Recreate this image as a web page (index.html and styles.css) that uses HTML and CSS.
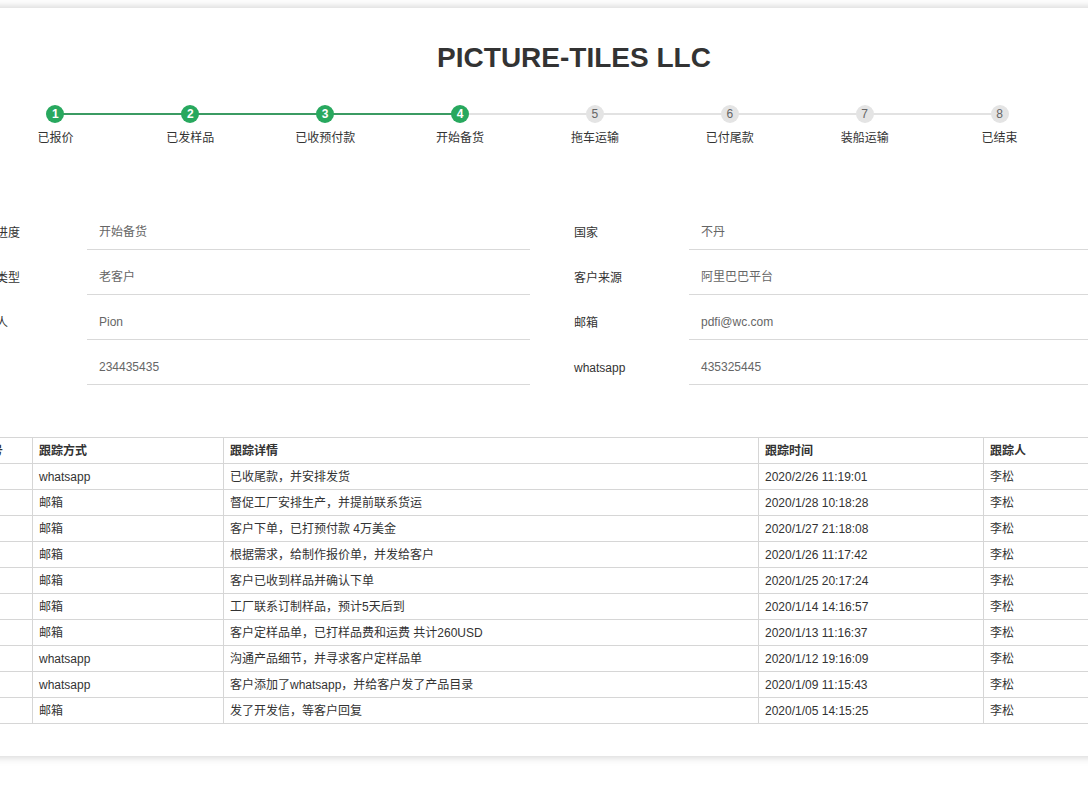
FILE: index.html
```html
<!DOCTYPE html>
<html lang="zh-CN">
<head>
<meta charset="utf-8">
<title>PICTURE-TILES LLC</title>
<link rel="stylesheet" href="styles.css">
</head>
<body>
<div class="card">
  <h1 class="title">PICTURE-TILES LLC</h1>

  <div class="steps">
    <div class="step done"><span class="dot">1</span><span class="label">已报价</span></div>
    <div class="step done"><span class="dot">2</span><span class="label">已发样品</span></div>
    <div class="step done"><span class="dot">3</span><span class="label">已收预付款</span></div>
    <div class="step done current"><span class="dot">4</span><span class="label">开始备货</span></div>
    <div class="step"><span class="dot">5</span><span class="label">拖车运输</span></div>
    <div class="step"><span class="dot">6</span><span class="label">已付尾款</span></div>
    <div class="step"><span class="dot">7</span><span class="label">装船运输</span></div>
    <div class="step last"><span class="dot">8</span><span class="label">已结束</span></div>
  </div>

  <div class="info">
    <div class="row"><span class="k">当前进度</span><span class="v">开始备货</span></div>
    <div class="row"><span class="k">国家</span><span class="v">不丹</span></div>
    <div class="row"><span class="k">客户类型</span><span class="v">老客户</span></div>
    <div class="row"><span class="k">客户来源</span><span class="v">阿里巴巴平台</span></div>
    <div class="row"><span class="k">联系人</span><span class="v">Pion</span></div>
    <div class="row"><span class="k">邮箱</span><span class="v">pdfi@wc.com</span></div>
    <div class="row"><span class="k">电话</span><span class="v">234435435</span></div>
    <div class="row"><span class="k">whatsapp</span><span class="v">435325445</span></div>
  </div>

  <table class="log">
    <colgroup>
      <col class="c1"><col class="c2"><col class="c3"><col class="c4"><col class="c5">
    </colgroup>
    <thead>
      <tr><th>序号</th><th>跟踪方式</th><th>跟踪详情</th><th>跟踪时间</th><th>跟踪人</th></tr>
    </thead>
    <tbody>
      <tr><td>1</td><td>whatsapp</td><td>已收尾款，并安排发货</td><td>2020/2/26 11:19:01</td><td>李松</td></tr>
      <tr><td>2</td><td>邮箱</td><td>督促工厂安排生产，并提前联系货运</td><td>2020/1/28 10:18:28</td><td>李松</td></tr>
      <tr><td>3</td><td>邮箱</td><td>客户下单，已打预付款 4万美金</td><td>2020/1/27 21:18:08</td><td>李松</td></tr>
      <tr><td>4</td><td>邮箱</td><td>根据需求，给制作报价单，并发给客户</td><td>2020/1/26 11:17:42</td><td>李松</td></tr>
      <tr><td>5</td><td>邮箱</td><td>客户已收到样品并确认下单</td><td>2020/1/25 20:17:24</td><td>李松</td></tr>
      <tr><td>6</td><td>邮箱</td><td>工厂联系订制样品，预计5天后到</td><td>2020/1/14 14:16:57</td><td>李松</td></tr>
      <tr><td>7</td><td>邮箱</td><td>客户定样品单，已打样品费和运费 共计260USD</td><td>2020/1/13 11:16:37</td><td>李松</td></tr>
      <tr><td>8</td><td>whatsapp</td><td>沟通产品细节，并寻求客户定样品单</td><td>2020/1/12 19:16:09</td><td>李松</td></tr>
      <tr><td>9</td><td>whatsapp</td><td>客户添加了whatsapp，并给客户发了产品目录</td><td>2020/1/09 11:15:43</td><td>李松</td></tr>
      <tr><td>10</td><td>邮箱</td><td>发了开发信，等客户回复</td><td>2020/1/05 14:15:25</td><td>李松</td></tr>
    </tbody>
  </table>
</div>
</body>
</html>
```

FILE: styles.css
```css
html {
  margin: 0;
  padding: 0;
  background: #ffffff;
  overflow: hidden;
}

body {
  margin: 0;
  padding: 8px 0 20px 0;
  background: #ffffff;
  font-family: "Liberation Sans", Arial, "Noto Sans CJK SC", sans-serif;
  font-size: 12px;
  color: #333333;
}

.card {
  margin-left: -60px;
  width: 1204px;
  height: 715px;
  padding: 33px 32px 0 32px;
  background: #ffffff;
  box-shadow: 0 0 9px rgba(0, 0, 0, 0.22);
}

.title {
  margin: 3px 0 0 0;
  font-size: 28px;
  line-height: 28px;
  font-weight: bold;
  color: #333333;
  text-align: center;
}

/* steps */
.steps {
  display: flex;
  margin: 33px 0 0 16px;
  width: 1079px;
}

.step {
  flex: 1;
  position: relative;
  display: flex;
  flex-direction: column;
  align-items: center;
}

.step::after {
  content: "";
  position: absolute;
  top: 8px;
  left: 50%;
  width: 100%;
  height: 2px;
  background: #e2e2e2;
  z-index: 0;
}

.step.done::after {
  background: #3b9b63;
}

.step.current::after {
  background: #e2e2e2;
}

.step.last::after {
  display: none;
}

.dot {
  position: relative;
  z-index: 1;
  width: 18px;
  height: 18px;
  border-radius: 50%;
  background: #e4e4e4;
  color: #666666;
  font-size: 12px;
  line-height: 18px;
  text-align: center;
}

.step.done .dot {
  background: #28a85e;
  color: #ffffff;
  font-weight: bold;
}

.label {
  margin-top: 7px;
  line-height: 16px;
  color: #333333;
  white-space: nowrap;
}

/* info */
.info {
  display: grid;
  grid-template-columns: 558px 558px;
  column-gap: 44px;
  margin-top: 59px;
}

.row {
  display: flex;
  height: 45px;
}

.k {
  width: 115px;
  flex: none;
  padding-top: 20px;
  line-height: 16px;
  color: #333333;
  white-space: nowrap;
}

.v {
  width: 443px;
  flex: none;
  box-sizing: border-box;
  padding: 19px 0 0 12px;
  line-height: 16px;
  color: #666666;
  border-bottom: 1px solid #d9d9d9;
}

/* table */
.log {
  margin-top: 52px;
  width: 1204px;
  table-layout: fixed;
  border-collapse: collapse;
}

.c1 { width: 60px; }
.c2 { width: 191px; }
.c3 { width: 535px; }
.c4 { width: 225px; }
.c5 { width: 193px; }

.log th,
.log td {
  border: 1px solid #d6d6d6;
  padding: 1px 6px 0 6px;
  height: 24px;
  line-height: 24px;
  text-align: left;
  font-size: 12px;
  color: #333333;
  white-space: nowrap;
}

.log th {
  font-weight: bold;
}
```
